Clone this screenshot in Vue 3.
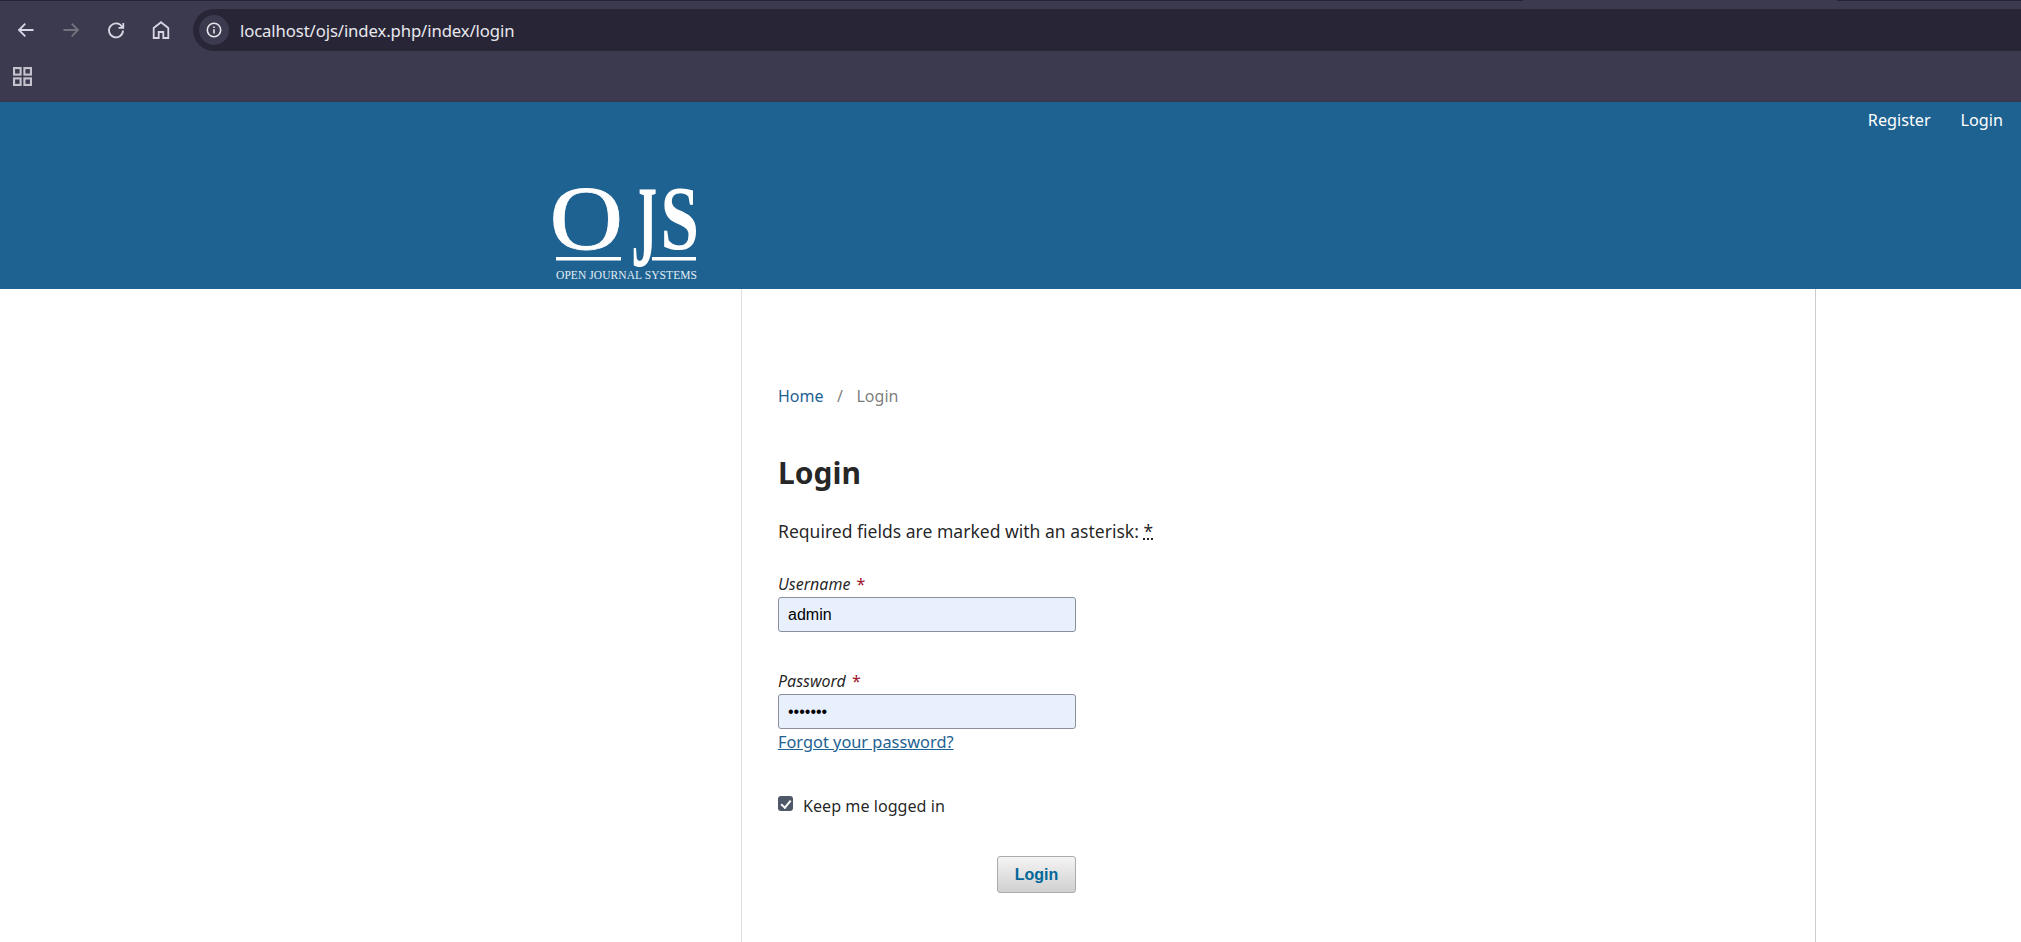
<script setup>
const topLinks = ['Register', 'Login']
</script>

<template>
  <div class="page">
    <div class="chrome">
      <div class="tabstrip"><div class="tabedge left"></div><div class="tabedge right"></div></div>
      <div class="toolbar">
        <div class="navs">
          <svg class="nav" viewBox="0 0 24 24"><path d="M19.500 12H5.500M11.300 5.700 5 12l6.300 6.300" /></svg>
          <svg class="nav dim" viewBox="0 0 24 24"><path d="M4.500 12h14M12.700 5.700 19 12l-6.300 6.300" /></svg>
          <svg class="nav" viewBox="0 0 24 24"><path d="M18.300 9.300A7 7 0 1 0 19 12.500M19.300 5v4.800h-4.800" /></svg>
          <svg class="nav" viewBox="0 0 24 24"><path d="M12 4.200 19.300 10v10h-5v-6h-4.600v6h-5V10z" /></svg>
        </div>
        <div class="omnibox">
          <span class="infochip">
            <svg viewBox="0 0 16 16" class="info"><circle cx="8" cy="8" r="6.700" /><path d="M8 7.200v4.200M8 4.400v1.500" /></svg>
          </span>
          <span class="url">localhost/ojs/index.php/index/login</span>
        </div>
      </div>
      <div class="bookmarks">
        <svg class="apps" viewBox="0 0 18 18"><rect x="1" y="1" width="6.200" height="6.200" /><rect x="10.800" y="1" width="6.200" height="6.200" /><rect x="1" y="10.800" width="6.200" height="6.200" /><rect x="10.800" y="10.800" width="6.200" height="6.200" /></svg>
      </div>
    </div>

    <header class="siteheader">
      <nav class="usernav">
        <a v-for="l in topLinks" :key="l" class="userlink">{{ l }}</a>
      </nav>
      <svg class="logo" viewBox="550 150 150 145">
        <g class="logoletters">
          <text transform="translate(549.500 249) scale(1.120 1)">O</text>
          <text class="heavy" transform="translate(631.500 265.500) scale(.560 1.290)">J</text>
          <text class="heavy" transform="translate(660.500 249) scale(.760 1)">S</text>
        </g>
        <rect x="556" y="257" width="65" height="3.500" fill="#fff" />
        <rect x="652" y="257" width="44" height="3.500" fill="#fff" />
        <text class="tagline" x="556" y="279" textLength="141" lengthAdjust="spacing">OPEN JOURNAL SYSTEMS</text>
      </svg>
    </header>

    <main class="column">
      <div class="breadcrumb">
        <a class="crumb">Home</a><span class="sep">/</span><span class="current">Login</span>
      </div>
      <h1 class="title">Login</h1>
      <p class="required">Required fields are marked with an asterisk: <abbr class="ast">*</abbr></p>

      <form class="form" @submit.prevent>
        <label class="field">
          <span class="label">Username <em class="star">*</em></span>
          <input class="input" type="text" value="admin" />
        </label>
        <label class="field second">
          <span class="label">Password <em class="star">*</em></span>
          <input class="input" type="password" value="1234567" />
        </label>
        <a class="forgot">Forgot your password?</a>
        <label class="remember">
          <input class="check" type="checkbox" checked />
          <span>Keep me logged in</span>
        </label>
        <div class="actions"><button class="submit">Login</button></div>
      </form>
    </main>
  </div>
</template>

<style scoped>
.page { height: 942px; overflow: hidden; background: #fff; font-family: "Noto Sans", sans-serif; color: rgba(0,0,0,.87); }
.chrome { background: #3c3a4e; height: 102px; box-sizing: border-box; border-bottom: 1px solid #33384e; display: flex; flex-direction: column; }
.tabstrip { height: 9px; display: flex; justify-content: space-between; }
.tabedge { height: 1px; background: #24233a; }
.tabedge.left { width: 1523px; }
.tabedge.right { width: 184px; }
.toolbar { height: 42px; display: flex; align-items: center; }
.navs { display: flex; align-items: center; width: 193px; padding-left: 13.500px; gap: 21px; box-sizing: border-box; }
.nav { width: 24px; height: 24px; fill: none; stroke: #d8d6e4; stroke-width: 1.800; flex: none; }
.nav.dim { stroke: #74727f; }
.omnibox { flex: 1; height: 42px; background: #272536; border-radius: 21px 0 0 21px; display: flex; align-items: center; padding-left: 6px; }
.infochip { height: 30px; width: 30px; border-radius: 50%; background: #3c3a4e; display: flex; align-items: center; justify-content: center; }
.info { width: 16px; height: 16px; fill: none; stroke: #e6e4ec; stroke-width: 1.600; }
.url { margin-left: 11px; font: 400 16.700px "Noto Sans", sans-serif; letter-spacing: -.1px; color: #e9e8ee; }
.bookmarks { flex: 1; padding-left: 13px; display: flex; align-items: center; }
.apps { width: 19px; height: 19px; fill: none; stroke: #c4c2cc; stroke-width: 2; }

.siteheader { height: 187px; background: #1e6292; position: relative; }
.usernav { display: flex; justify-content: flex-end; gap: 30px; padding: 6px 18px 0 0; }
.userlink { color: #fff; font-size: 16.200px; line-height: 24px; }
.logo { position: absolute; left: 550px; top: 48px; width: 150px; height: 145px; }
.logoletters { font-family: "Liberation Serif", serif; font-size: 91px; fill: #fff; stroke: #fff; stroke-width: .8px; }
.heavy { font-weight: 700; stroke-width: 0; }
.tagline { font-family: "Liberation Serif", serif; font-size: 11.500px; fill: #e4edf3; }

.column { margin-left: 741px; width: 1075px; box-sizing: border-box; height: 653px; border-left: 1px solid #ddd; border-right: 1px solid #ccc; padding: 0 36px; }
.breadcrumb { padding-top: 95px; font-size: 16px; line-height: 24px; display: flex; }
.crumb { color: #1e6292; }
.sep { margin: 0 13.500px; color: rgba(0,0,0,.54); }
.current { color: rgba(0,0,0,.54); }
.title { margin: 45px 0 0; font-size: 30px; line-height: 40px; font-weight: 700; }
.required { margin: 24px 0 0; font-size: 17.550px; line-height: 28px; }
.ast { text-decoration: underline dotted; }
.form { width: 298px; margin-top: 27px; }
.field { display: block; }
.second { margin-top: 37px; }
.label { display: block; font-size: 16px; line-height: 24px; font-style: italic; margin-bottom: 1px; }
.star { color: #a0102a; font-style: normal; margin-left: 2px; }
.input { display: block; width: 298px; height: 35px; box-sizing: border-box; background: #e8f0fe; border: 1px solid #8a8f99; border-radius: 3px; padding: 0 9px; font: 400 16px "Liberation Sans", sans-serif; color: #000; outline: none; }
.forgot { display: block; color: #1e6292; text-decoration: underline; font-size: 16.350px; line-height: 24px; margin-top: 1px; }
.remember { display: flex; align-items: center; margin-top: 40px; font-size: 16.150px; line-height: 24px; }
.check { appearance: none; position: relative; width: 15px; height: 15px; margin: -5px 10px 0 0; background: #4f5868; border-radius: 3px; }
.check::after { content: ""; position: absolute; left: 5px; top: 1.500px; width: 3.500px; height: 8px; border: solid #fff; border-width: 0 2.500px 2.500px 0; transform: rotate(40deg); }
.actions { display: flex; justify-content: flex-end; margin-top: 38px; }
.submit { width: 79px; height: 37px; border: 1px solid #aaa; border-radius: 3px; background: linear-gradient(#f4f4f4, #d0d0d0); color: #006798; font: 700 16px "Liberation Sans", sans-serif; }
</style>
